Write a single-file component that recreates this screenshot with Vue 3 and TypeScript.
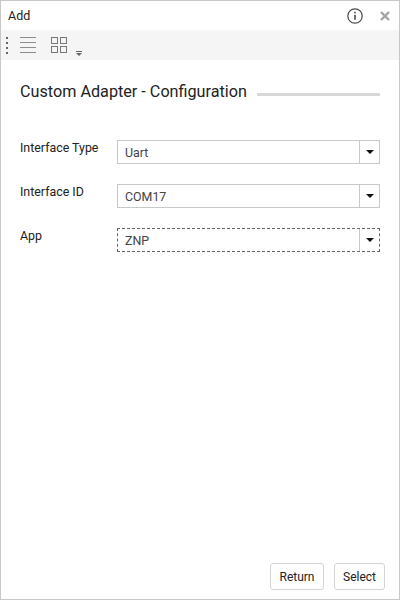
<template>
  <div class="window">
    <header class="title-bar">
      <span class="title-bar__text">Add</span>
      <div class="title-bar__actions">
        <svg class="icon-info" viewBox="0 0 16 16" fill="none" aria-hidden="true">
          <circle cx="8" cy="8" r="7.2" stroke="#4a4a4a" stroke-width="1.2" />
          <rect x="7.2" y="6.8" width="1.6" height="5" fill="#4a4a4a" />
          <rect x="7.2" y="3.8" width="1.6" height="1.6" fill="#4a4a4a" />
        </svg>
        <svg class="icon-close" viewBox="0 0 10 10" aria-hidden="true">
          <path d="M1 1 9 9M9 1 1 9" stroke="#a3a3a3" stroke-width="2.4" fill="none" />
        </svg>
      </div>
    </header>

    <div class="toolbar">
      <div class="toolbar__grip">
        <i v-for="n in 4" :key="n"></i>
      </div>
      <svg class="icon-list" viewBox="0 0 16 16" aria-hidden="true">
        <path d="M0 .5h16M0 5.5h16M0 10.5h16M0 15.5h16" stroke="#8c8c8c" fill="none" />
      </svg>
      <svg class="icon-grid" viewBox="0 0 16 16" fill="none" aria-hidden="true">
        <rect x=".5" y=".5" width="6" height="6" stroke="#777" />
        <rect x="9.5" y=".5" width="6" height="6" stroke="#777" />
        <rect x=".5" y="9.5" width="6" height="6" stroke="#777" />
        <rect x="9.5" y="9.5" width="6" height="6" stroke="#777" />
      </svg>
      <svg class="icon-more" viewBox="0 0 6 6" aria-hidden="true">
        <path d="M0 .5h6" stroke="#666" fill="none" />
        <path d="M0 2h6L3 5z" fill="#666" />
      </svg>
    </div>

    <main class="content">
      <div class="heading">
        <h1>Custom Adapter - Configuration</h1>
        <span class="heading__rule"></span>
      </div>

      <div class="form">
        <div v-for="field in fields" :key="field.label" class="field">
          <label>{{ field.label }}</label>
          <div class="select" :class="{ 'select--focus': field.focus }">
            <span class="select__value">{{ field.value }}</span>
            <span class="select__arrow"><i></i></span>
          </div>
        </div>
      </div>
    </main>

    <footer class="footer">
      <button type="button" class="btn-return">Return</button>
      <button type="button" class="btn-select">Select</button>
    </footer>
  </div>
</template>

<script setup lang="ts">
const fields = [
  { label: 'Interface Type', value: 'Uart', focus: false },
  { label: 'Interface ID', value: 'COM17', focus: false },
  { label: 'App', value: 'ZNP', focus: true },
];
</script>

<style>
body {
  margin: 0;
}
</style>

<style scoped>
.window {
  box-sizing: border-box;
  width: 400px;
  height: 600px;
  display: flex;
  flex-direction: column;
  border: 1px solid #c8c8c8;
  background: #fff;
  color: #222;
  font-family: Roboto, "Liberation Sans", sans-serif;
}

.title-bar {
  height: 29px;
  display: flex;
  align-items: center;
  justify-content: space-between;
  padding: 0 9px 0 7px;
  font-size: 12.5px;
}

.title-bar__actions {
  display: flex;
  align-items: center;
  gap: 17px;
}

.icon-info {
  width: 16px;
  height: 16px;
}

.icon-close {
  width: 10px;
  height: 10px;
}

.toolbar {
  height: 30px;
  display: flex;
  align-items: center;
  background: #f5f5f5;
  padding-left: 5px;
}

.toolbar__grip {
  display: flex;
  flex-direction: column;
  gap: 3px;
  margin-right: 12px;
}

.toolbar__grip i {
  width: 2px;
  height: 2px;
  background: #666;
}

.icon-list {
  width: 16px;
  height: 16px;
  margin-right: 15px;
}

.icon-grid {
  width: 16px;
  height: 16px;
  margin-right: 9px;
}

.icon-more {
  width: 6px;
  height: 6px;
  align-self: flex-end;
  margin-bottom: 3px;
}

.content {
  flex: 1;
  padding: 0 19px;
}

.heading {
  display: flex;
  align-items: center;
  gap: 10px;
  margin-top: 21px;
}

.heading h1 {
  margin: 0;
  font-size: 16.2px;
  font-weight: 400;
  line-height: 22px;
  white-space: nowrap;
}

.heading__rule {
  flex: 1;
  height: 3px;
  margin-top: 5px;
  background: #d8d8d8;
}

.form {
  margin-top: 37px;
  display: flex;
  flex-direction: column;
  gap: 20px;
}

.field {
  display: flex;
  align-items: flex-start;
  height: 24px;
}

.field label {
  width: 97px;
  font-size: 12.4px;
  line-height: 16px;
}

.select {
  flex: 1;
  box-sizing: border-box;
  height: 24px;
  display: flex;
  align-items: center;
  border: 1px solid #c8c8c8;
  font-size: 12.4px;
  color: #444;
}

.select--focus {
  border: 1px dashed #666;
}

.select__value {
  flex: 1;
  padding-left: 7px;
}

.select__arrow {
  width: 20px;
  height: 100%;
  display: flex;
  align-items: center;
  justify-content: center;
  border-left: 1px solid #c8c8c8;
  box-sizing: border-box;
}

.select__arrow i {
  width: 0;
  height: 0;
  border-left: 4px solid transparent;
  border-right: 4px solid transparent;
  border-top: 4px solid #111;
}

.footer {
  display: flex;
  justify-content: flex-end;
  gap: 10px;
  padding: 0 14px 9px 0;
}

.footer button {
  box-sizing: border-box;
  height: 27px;
  padding: 0;
  border: 1px solid #d4d4d4;
  border-radius: 3px;
  background: #fff;
  color: #222;
  font: 400 12px Roboto, "Liberation Sans", sans-serif;
}

.btn-return {
  width: 54px;
}

.btn-select {
  width: 51px;
}
</style>
